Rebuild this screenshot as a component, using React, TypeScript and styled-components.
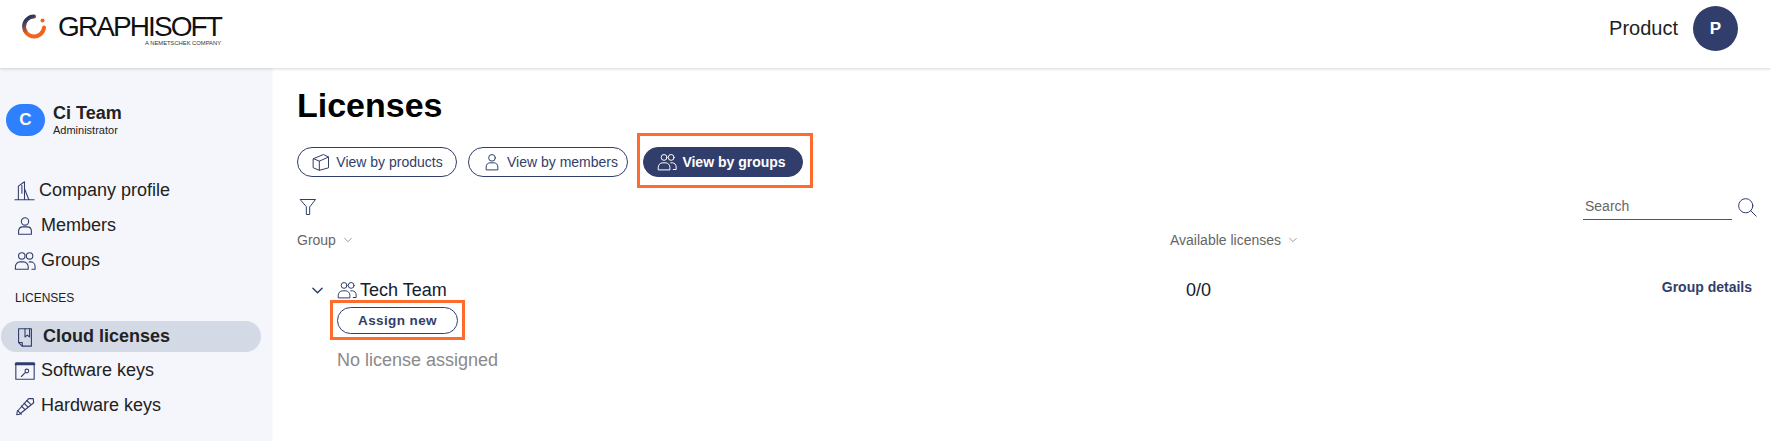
import React from 'react';
import styled, { createGlobalStyle } from 'styled-components';

const navy = '#313e6b';

const GlobalStyle = createGlobalStyle`
    html, body {
        margin: 0;
        padding: 0;
        height: 100%;
        background: #fff;
        font-family: "Liberation Sans", Arial, sans-serif;
        overflow: hidden;
    }
`;

const Icon = ({ size = 20, children }: { size?: number; children: React.ReactNode }) => (
    <Svg width={size} height={size} viewBox="0 0 24 24">{children}</Svg>
);

const Svg = styled.svg`
    flex: none;
    fill: none;
    stroke: currentColor;
    stroke-width: 1.2;
    stroke-linejoin: round;
    stroke-linecap: round;
`;

const PersonIcon = ({ size }: { size?: number }) => (
    <Icon size={size}>
        <circle cx="12" cy="7" r="4" />
        <path d="M5 21v-3c0-3 2-5 4.500-5h5c2.500 0 4.500 2 4.500 5v3z" />
    </Icon>
);

const PeopleIcon = ({ size }: { size?: number }) => (
    <Icon size={size}>
        <circle cx="8.500" cy="6.500" r="3.500" />
        <circle cx="17" cy="6.500" r="3.500" />
        <path d="M1.500 21v-2.500c0-3 2.200-5.500 5-5.500h4c2.800 0 5 2.500 5 5.500V21z" />
        <path d="M16.500 13h2c2.500 0 4.500 2.200 4.500 5v3h-3.500" />
    </Icon>
);

const BuildingIcon = () => (
    <Icon size={21}>
        <path d="M1 22.500h22M5 22.500V7L12 2v20.500M12 10l5 12.500M9 6v9" />
    </Icon>
);

const CloudIcon = () => (
    <Icon size={22}>
        <path d="M5 3h14v19H9l-4-4z" />
        <path d="M12 3v9l2.500-2 2.500 2V3M5 18h4v4" />
    </Icon>
);

const SoftwareIcon = () => (
    <Icon size={22}>
        <rect x="2" y="3" width="20" height="18" />
        <path d="M2 4.500h20" strokeWidth="2.500" />
        <circle cx="14" cy="12" r="2" />
        <path d="M12.500 13.500L8 18" />
    </Icon>
);

const PencilIcon = () => (
    <Icon size={22}>
        <path d="M6 21l-3 .5.500-3.500L16 4l5 0 .5 4.500z" />
        <path d="M4 17l4 4M8 12l4 4M11 9l4 4M14 6l4 4" />
    </Icon>
);

const BoxIcon = () => (
    <Icon size={20}>
        <path d="M3 8l12-5 6 3v13l-11 3-7-3z" />
        <path d="M3 8l7 3 11-5M10 11v11" />
    </Icon>
);

const FilterIcon = () => (
    <Icon size={20}>
        <path d="M3 3h18l-7 9v9h-4v-9z" />
    </Icon>
);

const SearchIcon = () => (
    <Icon size={20}>
        <circle cx="10.500" cy="10.500" r="8.500" />
        <path d="M16.500 16.500L23 23" />
    </Icon>
);

const Chevron = ({ size = 8, weight = 1 }: { size?: number; weight?: number }) => (
    <Svg width={size} height={size} viewBox="0 0 12 12" style={{ strokeWidth: weight }}>
        <path d="M1 3.500l5 5 5-5" />
    </Svg>
);

const LogoMark = () => (
    <svg width="25" height="25" viewBox="0 0 25 25">
        <defs>
            <linearGradient id="logoRing" x1="0" y1="0" x2="0.700" y2="1">
                <stop offset="0.150" stopColor="#26375f" />
                <stop offset="0.650" stopColor="#f0641e" />
            </linearGradient>
        </defs>
        <path
            d="M13 2.500A10 10 0 1 0 23 13.500"
            fill="none"
            stroke="url(#logoRing)"
            strokeWidth="4"
            strokeLinecap="round"
        />
        <circle cx="21.500" cy="6.500" r="2" fill="#f0641e" />
    </svg>
);

function App() {
    return (
        <>
            <GlobalStyle />
            <Header>
                <Logo>
                    <LogoMark />
                    <LogoWords>
                        <LogoName>GRAPHISOFT</LogoName>
                        <LogoTag>A NEMETSCHEK COMPANY</LogoTag>
                    </LogoWords>
                </Logo>
                <UserArea>
                    <span>Product</span>
                    <UserAvatar>P</UserAvatar>
                </UserArea>
            </Header>
            <Body>
                <Sidebar>
                    <TeamCard>
                        <TeamAvatar>C</TeamAvatar>
                        <div>
                            <TeamName>Ci Team</TeamName>
                            <TeamRole>Administrator</TeamRole>
                        </div>
                    </TeamCard>
                    <NavItem $gap={4}><BuildingIcon />Company profile</NavItem>
                    <NavItem><PersonIcon size={22} />Members</NavItem>
                    <NavItem><PeopleIcon size={22} />Groups</NavItem>
                    <NavTitle>LICENSES</NavTitle>
                    <NavItem $active $gap={7}><CloudIcon />Cloud licenses</NavItem>
                    <NavItem><SoftwareIcon />Software keys</NavItem>
                    <NavItem><PencilIcon />Hardware keys</NavItem>
                </Sidebar>
                <Main>
                    <Title>Licenses</Title>
                    <Tabs>
                        <TabButton><BoxIcon />View by products</TabButton>
                        <TabButton $shift={4}><PersonIcon size={20} />View by members</TabButton>
                        <Highlight $top={11} $right={7} $bottom={8} $left={3}>
                            <TabButton $active $shift={-3}><PeopleIcon size={20} />View by groups</TabButton>
                        </Highlight>
                    </Tabs>
                    <Toolbar>
                        <FilterButton><FilterIcon /></FilterButton>
                        <SearchBox>
                            <SearchField>Search</SearchField>
                            <SearchButton><SearchIcon /></SearchButton>
                        </SearchBox>
                    </Toolbar>
                    <Columns>
                        <ColumnHead>Group <Chevron /></ColumnHead>
                        <ColumnHead>Available licenses <Chevron /></ColumnHead>
                    </Columns>
                    <GroupRow>
                        <GroupName>
                            <Expander><Chevron size={11} weight={1.600} /></Expander>
                            <GroupIcon><PeopleIcon size={20} /></GroupIcon>
                            Tech Team
                        </GroupName>
                        <Count>0/0</Count>
                        <DetailsLink>Group details</DetailsLink>
                    </GroupRow>
                    <GroupBody>
                        <Highlight $top={4} $right={4} $bottom={3} $left={4}>
                            <AssignButton>Assign new</AssignButton>
                        </Highlight>
                        <EmptyNote>No license assigned</EmptyNote>
                    </GroupBody>
                </Main>
            </Body>
        </>
    );
}

const Header = styled.header`
    position: relative;
    z-index: 1;
    height: 68px;
    box-sizing: border-box;
    display: flex;
    align-items: flex-start;
    justify-content: space-between;
    padding: 14px 33px 0 21px;
    background: #fff;
    box-shadow: 0 1px 3px rgba(0, 0, 0, 0.16);
`;

const Logo = styled.div`
    display: flex;
    align-items: flex-start;
    gap: 12px;
`;

const LogoWords = styled.div`
    display: flex;
    flex-direction: column;
    align-items: flex-end;
    color: #111;
`;

const LogoName = styled.div`
    font-size: 28px;
    line-height: 26px;
    letter-spacing: -1.9px;
`;

const LogoTag = styled.div`
    font-size: 5.800px;
    line-height: 6px;
    color: #333;
`;

const UserArea = styled.div`
    display: flex;
    align-items: center;
    gap: 15px;
    margin-top: -8px;
    font-size: 20px;
    color: #222;
`;

const UserAvatar = styled.div`
    width: 45px;
    height: 45px;
    border-radius: 50%;
    display: flex;
    align-items: center;
    justify-content: center;
    background: ${navy};
    color: #fff;
    font-size: 17px;
    font-weight: 700;
`;

const Body = styled.div`
    display: flex;
    height: 373px;
`;

const Sidebar = styled.aside`
    width: 273px;
    flex: none;
    box-sizing: border-box;
    padding: 35px 11px 0 1px;
    background: #f5f6fb;
    border-right: 1px solid #fafafc;
    color: #222;
`;

const TeamCard = styled.div`
    display: flex;
    align-items: center;
    gap: 8px;
    margin: 0 0 36px 5px;
`;

const TeamAvatar = styled.div`
    width: 39px;
    height: 32px;
    border-radius: 16px;
    display: flex;
    align-items: center;
    justify-content: center;
    background: #2f80ff;
    color: #fff;
    font-size: 17px;
    font-weight: 700;
`;

const TeamName = styled.div`
    font-size: 18px;
    line-height: 21px;
    font-weight: 700;
`;

const TeamRole = styled.div`
    font-size: 11px;
    line-height: 13px;
`;

const NavItem = styled.div<{ $active?: boolean; $gap?: number }>`
    height: ${(p) => (p.$active ? 31 : 35)}px;
    margin: ${(p) => (p.$active ? '0 0 1px' : '0')};
    display: flex;
    align-items: center;
    gap: ${(p) => p.$gap ?? 5}px;
    padding-left: 13px;
    border-radius: 16px;
    background: ${(p) => (p.$active ? '#d4d9e6' : 'transparent')};
    font-size: 18px;
    font-weight: ${(p) => (p.$active ? 700 : 400)};
    color: #222;

    svg {
        color: ${navy};
    }
`;

const NavTitle = styled.div`
    margin: 13px 0 16px 14px;
    font-size: 12px;
    line-height: 14px;
`;

const Main = styled.main`
    flex: 1;
    min-width: 0;
    padding: 16px 19px 0 24px;
`;

const Title = styled.h1`
    margin: 0;
    font-size: 34px;
    line-height: 42px;
    font-weight: 700;
    color: #000;
`;

const Tabs = styled.div`
    display: flex;
    align-items: center;
    margin-top: 21px;
    gap: 11px;

    & > button:nth-child(2) {
        margin-right: 4px;
    }
`;

const Highlight = styled.div<{ $top: number; $right: number; $bottom: number; $left: number }>`
    display: inline-flex;
    margin: ${(p) => -p.$top - 3}px ${(p) => -p.$right - 3}px ${(p) => -p.$bottom - 3}px ${(p) => -p.$left - 3}px;
    padding: ${(p) => p.$top}px ${(p) => p.$right}px ${(p) => p.$bottom}px ${(p) => p.$left}px;
    border: 3px solid #ff6b2d;
`;

const TabButton = styled.button<{ $active?: boolean; $shift?: number }>`
    height: 30px;
    width: 160px;
    box-sizing: border-box;
    display: flex;
    align-items: center;
    justify-content: center;
    gap: 5px;
    padding: 0;
    padding-left: ${(p) => Math.max(p.$shift ?? 0, 0)}px;
    padding-right: ${(p) => Math.max(-(p.$shift ?? 0), 0)}px;
    border: 1px solid ${navy};
    border-radius: 15px;
    background: ${(p) => (p.$active ? navy : '#fff')};
    color: ${(p) => (p.$active ? '#fff' : navy)};
    font-family: inherit;
    font-size: 14px;
    font-weight: ${(p) => (p.$active ? 700 : 400)};
`;

const Toolbar = styled.div`
    display: flex;
    align-items: flex-start;
    justify-content: space-between;
    margin-top: 20px;
`;

const FilterButton = styled.div`
    height: 20px;
    margin-left: 1px;
    color: ${navy};
`;

const SearchBox = styled.div`
    display: flex;
    align-items: flex-start;
    gap: 5px;
    margin-right: -5px;
`;

const SearchField = styled.div`
    width: 149px;
    height: 23px;
    box-sizing: border-box;
    padding: 1px 0 0 2px;
    border-bottom: 1px solid #555;
    color: #666;
    font-size: 14px;
    line-height: 16px;
`;

const SearchButton = styled.div`
    height: 20px;
    color: ${navy};
`;

const Columns = styled.div`
    display: grid;
    grid-template-columns: 873px 1fr;
    margin-top: 12px;
`;

const ColumnHead = styled.div`
    display: flex;
    align-items: center;
    gap: 8px;
    font-size: 14px;
    line-height: 16px;
    color: #666;
`;

const GroupRow = styled.div`
    display: grid;
    grid-template-columns: 889px 1fr auto;
    align-items: center;
    margin-top: 30px;
    height: 24px;
`;

const GroupName = styled.div`
    display: flex;
    align-items: center;
    padding-left: 15px;
    font-size: 18px;
    color: #14202e;
`;

const Expander = styled.span`
    display: flex;
    width: 25px;
    color: ${navy};
`;

const GroupIcon = styled.span`
    display: flex;
    width: 23px;
    color: ${navy};
`;

const Count = styled.div`
    font-size: 18px;
    color: #14202e;
`;

const DetailsLink = styled.div`
    margin-top: -6px;
    font-size: 14px;
    font-weight: 700;
    color: ${navy};
`;

const GroupBody = styled.div`
    display: flex;
    flex-direction: column;
    align-items: flex-start;
    padding: 5px 0 0 40px;
`;

const AssignButton = styled.button`
    width: 121px;
    height: 27px;
    box-sizing: border-box;
    padding: 0;
    border: 1px solid ${navy};
    border-radius: 14px;
    background: #fff;
    color: ${navy};
    font-family: inherit;
    font-size: 13.500px;
    font-weight: 700;
    letter-spacing: 0.4px;
`;

const EmptyNote = styled.div`
    margin-top: 15px;
    font-size: 18px;
    line-height: 22px;
    color: #8a8a8a;
`;

export default App;
